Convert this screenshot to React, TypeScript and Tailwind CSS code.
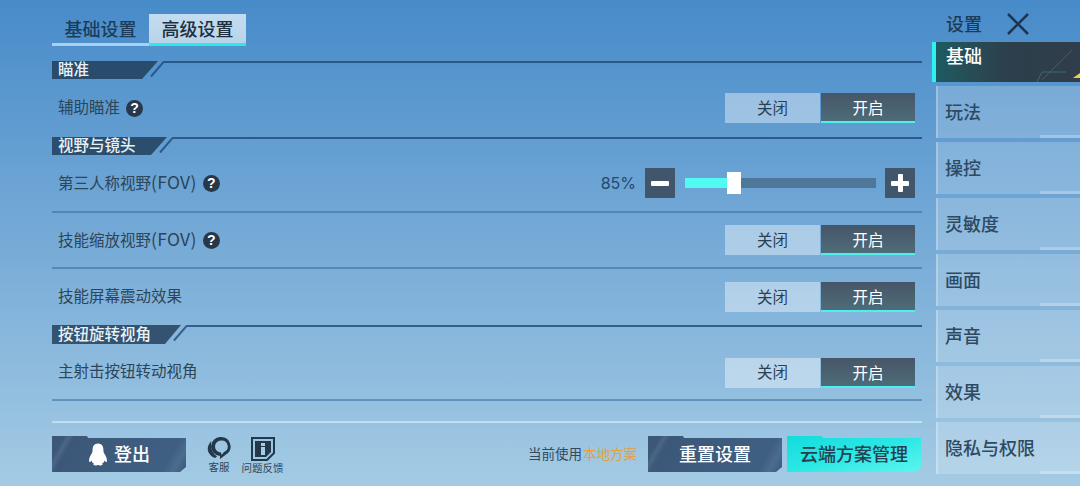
const CJK = "font-['Noto_Sans_CJK_SC','Noto_Sans',sans-serif]";

function Help() {
  return (
    <span className="ml-[6px] grid h-[17px] w-[17px] place-items-center rounded-full bg-[#27384a] font-['Liberation_Sans',sans-serif] text-[14px] leading-none font-bold text-white">
      ?
    </span>
  );
}

function Toggle() {
  return (
    <div className="flex h-[30px] w-[190px] text-[15.5px] leading-none">
      <div className="grid w-[95px] place-items-center bg-white/40 pb-[1px] text-[#2b3f52]">关闭</div>
      <div className="ml-px grid flex-1 place-items-center border-b-2 border-[#4ff0ec] bg-gradient-to-b from-[#465668] to-[#4d6c78] pt-[2px] text-white">
        开启
      </div>
    </div>
  );
}

function SectionHead({ title, tag, h = "h-[18px]" }: { title: string; tag: string; h?: string }) {
  return (
    <div className={`flex ${h}`}>
      <div
        className={`${tag} flex h-full items-center bg-[#1e3a55]/80 pb-[2px] pl-[6px] text-[15.5px] leading-none font-medium text-[#e8f0f5] [clip-path:polygon(0_0,100%_0,calc(100%-16px)_100%,0_100%)]`}
      >
        {title}
      </div>
      <svg width="14" height="18" viewBox="0 0 14 18" className="-ml-[8px] shrink-0">
        <path d="M14 0.5 L1 15.5" stroke="#1f4a75" strokeOpacity="0.8" strokeWidth="2" fill="none" />
      </svg>
      <div className="h-[1.5px] flex-1 bg-[#1f4a75]/80" />
    </div>
  );
}

function Row({ label, fov, help, divider = true, h, children }: { label: string; fov?: boolean; help?: boolean; divider?: boolean; h: string; children?: React.ReactNode }) {
  return (
    <div className={`${h} flex items-center pr-[7px] pl-[6px] ${divider ? "border-b-2 border-[#2f6697]/50" : ""}`}>
      <span className="pb-[3px] text-[15.5px] leading-none text-[#2d4558]">
        {label}
        {fov && <span className="text-[17.5px] tracking-[0.3px]">(FOV)</span>}
      </span>
      {help && <Help />}
      <div className="ml-auto">{children}</div>
    </div>
  );
}

function Slider() {
  return (
    <div className="flex items-center">
      <span className="mr-[9px] font-['Inter',sans-serif] text-[16px] leading-none text-[#24496e]">85%</span>
      <div className="grid h-[30px] w-[30px] place-items-center bg-[#42566b]">
        <div className="h-[5px] w-[18px] rounded-[1px] bg-white" />
      </div>
      <div className="relative mr-[9px] ml-[10px] h-[10px] w-[191px] bg-[#4f7799]">
        <div className="h-full w-[44px] bg-[#52fbf2]" />
        <div className="absolute top-[-6px] left-[42px] h-[22px] w-[14px] bg-white" />
      </div>
      <div className="relative h-[30px] w-[30px] bg-[#42566b]">
        <div className="absolute top-[13px] left-[6px] h-[5px] w-[18px] rounded-[1px] bg-white" />
        <div className="absolute top-[6px] left-[13px] h-[18px] w-[5px] rounded-[1px] bg-white" />
      </div>
    </div>
  );
}

function DarkButton({ children, className = "" }: { children: React.ReactNode; className?: string }) {
  return (
    <div
      className={`${className} flex h-[36px] w-[134px] items-center justify-center bg-[linear-gradient(120deg,#3c5878_0%,#3c5878_8%,#4a6688_11%,#3c5878_15%,#3f5f82_84%,#4c6c8e_91%,#3f5f82_97%)] pb-[2px] text-[18px] leading-none font-medium text-white [clip-path:polygon(0_0,26%_0,27%_2px,100%_2px,100%_calc(100%-5px),calc(100%-6px)_100%,0_100%)]`}
    >
      {children}
    </div>
  );
}

function Footer() {
  return (
    <div className="mt-[13px] flex h-[36px] items-start">
      <DarkButton>
        <svg width="20" height="25" viewBox="0 0 22 25" className="mt-[2px] mr-[6px]">
          <path
            d="M11 0.5 C6.5 0.5 5 4 5 8 C5 9.5 4.6 10.5 3.4 12.5 C1.6 15.5 0.6 18.5 1.4 20.5 C2 21.5 3.4 20 4 19 C4.4 21 5.6 22 6.6 22.8 C5.4 23.3 5.6 24.5 8 24.5 C9.5 24.5 10.5 24 11 24 C11.5 24 12.5 24.5 14 24.5 C16.4 24.5 16.6 23.3 15.4 22.8 C16.4 22 17.6 21 18 19 C18.6 20 20 21.5 20.6 20.5 C21.4 18.5 20.4 15.5 18.6 12.5 C17.4 10.5 17 9.5 17 8 C17 4 15.5 0.5 11 0.5 Z"
            fill="#fff"
          />
        </svg>
        登出
      </DarkButton>
      <div className="ml-[18px] flex w-[30px] flex-col items-center">
        <svg width="24" height="23" viewBox="0 0 24 23" className="mt-px">
          <path
            fillRule="evenodd"
            d="M14 0 A9.5 9.5 0 0 1 19 17.6 L13 22 L13 19 A9.5 9.5 0 0 1 14 0 Z M14 3.5 A6 6 0 0 0 14 15.5 L14.5 18 L17 15 A6 6 0 0 0 14 3.5 Z"
            fill="#24384c"
          />
          <path d="M4.5 4 C-1 9 -1 17 8 21 L10 19.5 C5 16.5 3 11 4.5 4 Z" fill="#24384c" />
        </svg>
        <span className="mt-[2px] text-[10.5px] leading-none whitespace-nowrap text-[#2d4558]">客服</span>
      </div>
      <div className="ml-[8px] flex w-[41px] flex-col items-center">
        <svg width="24" height="24" viewBox="0 0 24 24" className="mt-px">
          <path d="M1 1 H23 V16 L16 23 H1 Z" fill="none" stroke="#24384c" strokeWidth="2" />
          <path d="M4 4 H20 V15 L15 20 H4 Z" fill="#24384c" />
          <rect x="10" y="6" width="4" height="3" fill="#a5cce6" />
          <rect x="10" y="10" width="4" height="8" fill="#a5cce6" />
        </svg>
        <span className="mt-[2px] text-[10.5px] leading-none whitespace-nowrap text-[#2d4558]">问题反馈</span>
      </div>
      <div className="ml-auto flex h-full items-center text-[13.5px] leading-none whitespace-nowrap text-[#34495c]">
        当前使用<span className="ml-[1px] text-[#e2a040]">本地方案</span>
      </div>
      <DarkButton className="ml-[11px]">重置设置</DarkButton>
      <div className="mr-px ml-[5px] flex h-[36px] w-[134px] items-center justify-center bg-gradient-to-br from-[#10dcdc] via-[#2ae8e4] to-[#5af5ee] pb-[2px] text-[18px] leading-none font-medium text-[#264050] [clip-path:polygon(0_0,26%_0,27%_2px,100%_2px,100%_calc(100%-5px),calc(100%-6px)_100%,0_100%)]">
        云端方案管理
      </div>
    </div>
  );
}

const MENU = ["玩法", "操控", "灵敏度", "画面", "声音", "效果", "隐私与权限"];

function Sidebar() {
  return (
    <aside className="ml-[10px] w-[148px] shrink-0">
      <div className="flex h-[42px] items-start pl-[14px] text-[#1e3a56]">
        <span className="mt-[14px] text-[18px] leading-none font-medium">设置</span>
        <svg width="24" height="22" viewBox="0 0 24 22" className="mt-[13px] ml-[24px]">
          <path d="M2 1 L22 21 M22 1 L2 21" stroke="#1c3552" strokeWidth="2.5" fill="none" />
        </svg>
      </div>
      <div className="relative flex h-[40px] border-l-4 border-[#2ff0ee] bg-gradient-to-r from-[#1d5a60] via-[#2c3f4c] to-[#303d4a] pt-[4px] pl-[10px] text-[18px] leading-none font-medium text-white">
        基础
        <svg width="44" height="40" viewBox="0 0 44 40" className="absolute top-0 right-0">
          <path d="M1 40 L6 30 H30" stroke="#3b6a78" strokeWidth="1" fill="none" />
          <path d="M6 38 L36 8" stroke="#4a5c68" strokeWidth="1" fill="none" />
          <path d="M37 36 L44 31 V36 Z" fill="#f0d040" />
        </svg>
      </div>
      <div className="mt-[4px] ml-[4px] flex flex-col gap-[4px]">
        {MENU.map((m) => (
          <div
            key={m}
            className="relative flex h-[52px] items-center border-l-2 border-white/25 bg-white/20 pb-[3px] pl-[7px] text-[18px] leading-none font-medium text-[#2e4a62]"
          >
            {m}
            <div className="absolute right-0 bottom-0 h-[3px] w-[40px] bg-white/25" />
          </div>
        ))}
      </div>
    </aside>
  );
}

export default function App() {
  return (
    <div className={`${CJK} flex h-[486px] w-[1080px] overflow-hidden bg-gradient-to-b from-[#478bc9] to-[#a4cbe4]`}>
      <main className="ml-[52px] w-[870px] shrink-0 pt-[14px]">
        <div className="flex h-[32px] text-[18px] leading-none font-medium">
          <div className="flex w-[97px] items-center justify-center border-b-[3px] border-[#a8d0f0] pb-[2px] text-[#1c3c5c]">基础设置</div>
          <div className="flex w-[97px] items-center justify-center border-b-[3px] border-[#2ce8e8] bg-gradient-to-b from-[#c4dcf0] to-[#b8d4e8] pb-[2px] text-[#1e2f40]">高级设置</div>
        </div>
        <div className="mt-[15px]">
          <SectionHead title="瞄准" tag="w-[106px]" />
          <Row label="辅助瞄准" help divider={false} h="h-[58px]">
            <Toggle />
          </Row>
        </div>
        <div>
          <SectionHead title="视野与镜头" tag="w-[115px]" />
          <Row label="第三人称视野" fov help h="h-[58px]">
            <Slider />
          </Row>
          <Row label="技能缩放视野" fov help h="h-[56px]">
            <Toggle />
          </Row>
          <Row label="技能屏幕震动效果" divider={false} h="h-[56px]">
            <Toggle />
          </Row>
        </div>
        <div>
          <SectionHead title="按钮旋转视角" tag="w-[129px]" h="h-[19px]" />
          <Row label="主射击按钮转动视角" h="h-[57px] pt-[2px]">
            <Toggle />
          </Row>
        </div>
        <div className="mt-[20px] h-[2px] bg-[#c0def2]" />
        <Footer />
      </main>
      <Sidebar />
    </div>
  );
}
